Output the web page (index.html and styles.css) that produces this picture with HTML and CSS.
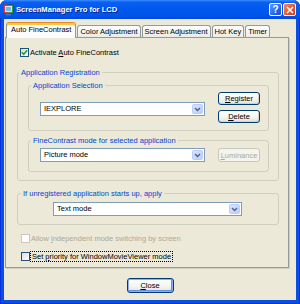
FILE: index.html
```html
<!DOCTYPE html>
<html lang="en">
  <head>
    <meta charset="UTF-8" />
    <title>ScreenManager Pro for LCD</title>
    <link rel="stylesheet" href="styles.css">
  </head>
  <body>
    <div class="window">
      <!-- Title bar -->
      <div class="titlebar">
        <svg class="app-icon" width="11" height="12" viewBox="0 0 11 12">
          <rect x="0.5" y="0.5" width="10" height="9" rx="1.5" fill="#2f9e3a" stroke="#1a4f8f" />
          <rect x="0.5" y="0.5" width="5" height="9" rx="1.5" fill="#d93a2b" />
          <rect x="2.5" y="2.5" width="6" height="5" fill="#6fb7ff" stroke="#fff" stroke-width="0.8" />
          <rect x="3" y="9.5" width="5" height="2" fill="#3a6fd8" />
        </svg>
        <span class="title">ScreenManager Pro for LCD</span>
        <span class="caption-btn help">?</span>
        <span class="caption-btn close">
          <svg width="8" height="8" viewBox="0 0 8 8">
            <path d="M1 1 L7 7 M7 1 L1 7" stroke="#fff" stroke-width="1.6" />
          </svg>
        </span>
      </div>

      <div class="client">
        <!-- Tabs -->
        <div class="tabs">
          <div class="tab active">Auto FineContrast</div>
          <div class="tab">Color Adjustment</div>
          <div class="tab">Screen Adjustment</div>
          <div class="tab">Hot Key</div>
          <div class="tab">Timer</div>
        </div>

        <div class="panel">
          <div class="check first">
            <span class="box">
              <svg width="7" height="7" viewBox="0 0 7 7">
                <path d="M0.8 3.3 L2.7 5.3 L6.2 1.2" fill="none" stroke="#21a121" stroke-width="1.6" />
              </svg>
            </span>
            <span>Activate <u>A</u>uto FineContrast</span>
          </div>

          <div class="group outer">
            <span class="group-title outer-title">Application Registration</span>

            <div class="group inner sel">
              <span class="group-title">Application Selection</span>
              <div class="row">
                <div class="combo app">
                  <span class="combo-text">IEXPLORE</span>
                  <span class="drop"><svg width="7" height="5" viewBox="0 0 7 5"><path d="M1 1 L3.5 3.5 L6 1" fill="none" stroke="#4d6185" stroke-width="1.4" /></svg></span>
                </div>
                <div class="btn-col">
                  <button class="btn"><u>R</u>egister</button>
                  <button class="btn"><u>D</u>elete</button>
                </div>
              </div>
            </div>

            <div class="group inner mode">
              <span class="group-title">FineContrast mode for selected application</span>
              <div class="row">
                <div class="combo app">
                  <span class="combo-text">Picture mode</span>
                  <span class="drop"><svg width="7" height="5" viewBox="0 0 7 5"><path d="M1 1 L3.5 3.5 L6 1" fill="none" stroke="#4d6185" stroke-width="1.4" /></svg></span>
                </div>
                <div class="btn-col">
                  <button class="btn tall" disabled><u>L</u>uminance</button>
                </div>
              </div>
            </div>
          </div>

          <div class="group unreg">
            <span class="group-title unreg-title">If unregistered application starts up, apply</span>
            <div class="combo text-mode">
              <span class="combo-text">Text mode</span>
              <span class="drop"><svg width="7" height="5" viewBox="0 0 7 5"><path d="M1 1 L3.5 3.5 L6 1" fill="none" stroke="#4d6185" stroke-width="1.4" /></svg></span>
            </div>
          </div>

          <div class="check disabled">
            <span class="box"></span>
            <span>Allow <u>i</u>ndependent mode switching by screen</span>
          </div>

          <div class="check">
            <span class="box"></span>
            <span class="focus">Set <u>p</u>riority for WindowMovieViewer mode</span>
          </div>
        </div>

        <div class="footer">
          <button class="btn default"><u>C</u>lose</button>
        </div>
      </div>
    </div>
  </body>
</html>
```

FILE: styles.css
```css
* {
  box-sizing: border-box;
  margin: 0;
  padding: 0;
}

body {
  font-family: "Liberation Sans", Arial, sans-serif;
  font-size: 7.5px;
  background-color: #ffffff;
}

.window {
  width: 300px;
  height: 304px;
  display: flex;
  flex-direction: column;
  background-color: #0b4fe2;
  border-radius: 7px 7px 0 0;
  box-shadow: inset 1px 0 #0831d9, inset -1px 0 #0831d9, inset 0 -1px #0831d9;
}

/* Title bar */
.titlebar {
  height: 19px;
  display: flex;
  align-items: center;
  padding: 0 4px 0 3px;
  border-radius: 7px 7px 0 0;
  background: linear-gradient(#3b8cff 0%, #0a5ff0 12%, #0058ee 45%, #0055e8 85%, #0046d8 100%);
}

.app-icon {
  flex: none;
  margin-right: 2px;
}

.title {
  color: #ffffff;
  font-weight: bold;
  font-size: 7.6px;
  text-shadow: 1px 1px #0a1e8c;
}

.caption-btn {
  width: 13px;
  height: 13px;
  border: 1px solid #ffffff;
  border-radius: 2px;
  display: flex;
  align-items: center;
  justify-content: center;
  color: #ffffff;
  font-weight: bold;
  font-size: 10px;
}

.help {
  margin-left: auto;
  margin-right: 1px;
  background: linear-gradient(135deg, #5d9bff, #1f5fe8 70%, #1a4fd0);
}

.close {
  background: linear-gradient(135deg, #f28a66, #e0552d 60%, #c2401f);
}

/* Client area */
.client {
  flex: 1;
  margin: 0 4px 4px;
  background-color: #ece9d8;
}

.tabs {
  height: 18px;
  display: flex;
  align-items: flex-end;
  padding-left: 2px;
}

.tab {
  height: 12px;
  line-height: 11px;
  padding: 0 2px;
  margin-right: 1px;
  border: 1px solid #919b9c;
  border-bottom: none;
  border-radius: 3px 3px 0 0;
  background: linear-gradient(#ffffff, #ecebe6);
  white-space: nowrap;
}

.tab.active {
  position: relative;
  height: 16px;
  line-height: 14px;
  padding: 0 4px;
  margin-bottom: -1px;
  border-top-color: #e68b2c;
  background: #fcfcfe;
  box-shadow: inset 0 2px #ffc83c;
}

.panel {
  margin: 0 7px 0 1px;
  padding-bottom: 6px;
  border: 1px solid #919b9c;
  box-shadow: 1px 1px 0 #d0cebf;
  background-color: #ece9d8;
}

/* Checkboxes */
.check {
  display: flex;
  align-items: center;
  height: 9px;
  margin: 9px 0 0 15px;
  white-space: nowrap;
}

.check.first {
  margin: 10px 0 0 14px;
}

.box {
  width: 9px;
  height: 9px;
  margin-right: 1px;
  border: 1px solid #1c5180;
  background: linear-gradient(135deg, #dcdcd7, #ffffff);
  display: flex;
  align-items: center;
  justify-content: center;
}

.check.disabled {
  color: #aca899;
}

.check.disabled .box {
  border-color: #cac8bb;
  background: #ffffff;
}

.focus {
  outline: 1px dotted #000000;
  outline-offset: 0;
  padding: 0 1px;
  line-height: 9px;
}

/* Group boxes */
.group {
  border: 1px solid #d0d0bf;
  border-radius: 3px;
}

.group-title {
  display: block;
  width: fit-content;
  line-height: 9px;
  margin: -5px 0 0 -9px;
  padding: 0 2px;
  color: #0046d5;
  background-color: #ece9d8;
  white-space: nowrap;
}

.outer {
  margin: 15px 9px 0 11px;
  padding: 0 9px 8px 10px;
}

.inner {
  padding: 0 8px 7px 11px;
}

.sel {
  margin-top: 8px;
}

.sel .row {
  margin-top: 2px;
}

.mode {
  margin-top: 9px;
  padding-bottom: 9px;
}

.mode .row {
  margin-top: 3px;
}

.row {
  display: flex;
  align-items: flex-start;
}

.unreg {
  margin: 12px 9px 0 11px;
  padding: 0 8px 8px 35px;
}

.unreg-title {
  margin-left: -32px;
}

/* Combo boxes */
.combo {
  height: 14px;
  display: flex;
  align-items: stretch;
  border: 1px solid #7f9db9;
  background-color: #ffffff;
}

.combo.app {
  width: 165px;
}

.sel .combo.app {
  margin-top: 10px;
}

.combo.text-mode {
  width: 189px;
  margin-top: 4px;
}

.combo-text {
  flex: 1;
  line-height: 12px;
  padding-left: 3px;
}

.drop {
  width: 11px;
  margin: 1px;
  border: 1px solid #b9cdf8;
  border-radius: 2px;
  background: linear-gradient(135deg, #dbe6fe, #b8cdfa);
  display: flex;
  align-items: center;
  justify-content: center;
}

/* Buttons */
.btn-col {
  display: flex;
  flex-direction: column;
  gap: 5px;
  margin-left: 13px;
}

.btn {
  width: 42px;
  height: 13px;
  font-family: inherit;
  font-size: 7.5px;
  line-height: 11px;
  color: #000000;
  border: 1px solid #003c74;
  border-radius: 3px;
  background: linear-gradient(#ffffff, #f3f3ef 60%, #e3e1d6);
  box-shadow: inset -1px -1px #d6d0c5;
}

.btn.tall {
  height: 14px;
}

.btn:disabled {
  color: #aca899;
  border-color: #c9c7ba;
  background: #f5f4ea;
  box-shadow: none;
}

.footer {
  display: flex;
  justify-content: center;
  margin-top: 10px;
}

.btn.default {
  width: 47px;
  height: 15px;
  line-height: 13px;
  box-shadow: inset 0 0 0 1px #8fb0ef, inset -1px -1px 0 1px #6a8ee8;
}
```
